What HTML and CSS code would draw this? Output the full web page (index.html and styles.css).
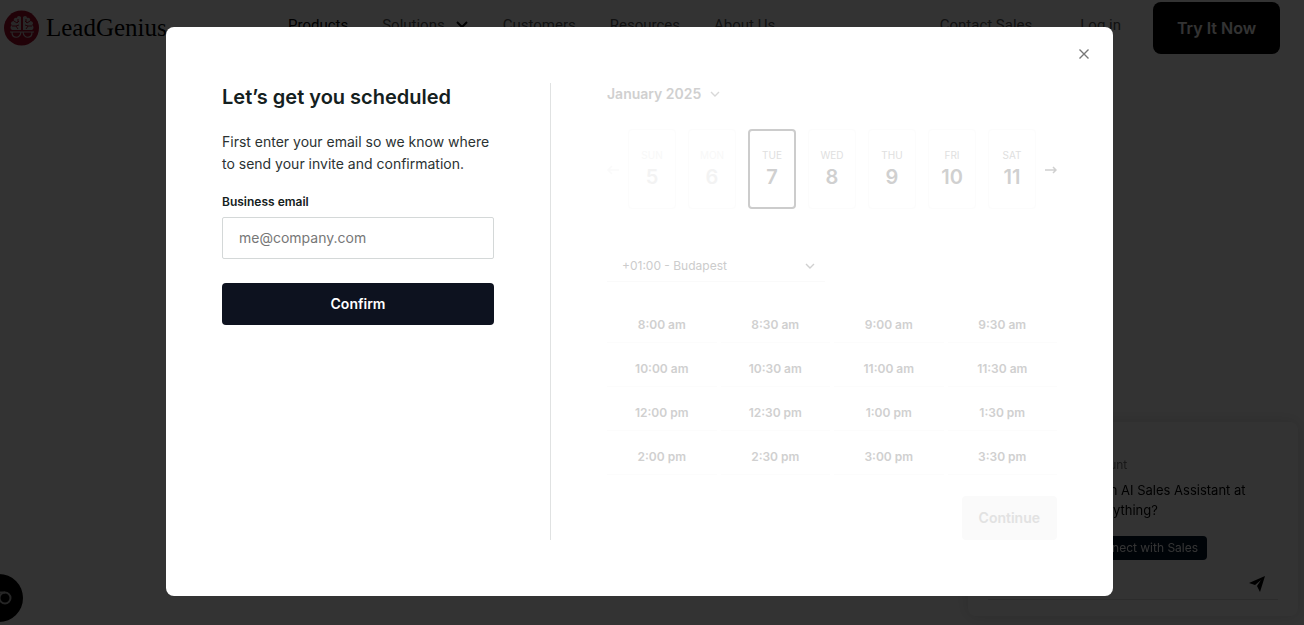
FILE: index.html
```html
<!DOCTYPE html>
<html lang="en">
<head>
    <meta charset="UTF-8">
    <meta name="viewport" content="width=device-width, initial-scale=1.0">
    <title>LeadGenius</title>
    <link rel="stylesheet" href="styles.css">
</head>
<body>
    <!-- Site header -->
    <header class="header">
        <a class="logo" href="#">
            <svg width="36" height="36" viewBox="0 0 36 36" aria-hidden="true">
                <circle cx="17.5" cy="18" r="17.5" fill="#a50d2a"/>
                <path d="M17 7c-2-2-4-1-4 1-2-1-4 1-3 3-3 0-4 3-2 4-2 1-2 4 0 5h9zM19 7c2-2 4-1 4 1 2-1 4 1 3 3 3 0 4 3 2 4 2 1 2 4 0 5h-9z" fill="#c8c8c8"/>
                <path d="M10 11l3 2 2-2M8 16h4l2 3M14 9v3M12 16l3-1M26 11l-3 2-2-2M28 16h-4l-2 3M22 9v3M24 16l-3-1" fill="none" stroke="#a50d2a"/>
                <path d="M6 22h24M8 22c0 7 8 7 9 0h2c1 7 9 7 9 0" fill="none" stroke="#c8c8c8" stroke-width="1.2"/>
            </svg>
            <span>LeadGenius</span>
        </a>
        <nav class="nav">
            <a class="active" href="#">Products</a>
            <a href="#">Solutions
                <svg width="14" height="10" viewBox="0 0 14 10" aria-hidden="true"><path d="M2 2l5 5 5-5" fill="none" stroke="#000" stroke-width="2"/></svg>
            </a>
            <a href="#">Customers</a>
            <a href="#">Resources</a>
            <a href="#">About Us</a>
        </nav>
        <div class="header-right">
            <a href="#">Contact Sales</a>
            <a href="#">Log in</a>
            <button class="try" type="button">Try It Now</button>
        </div>
    </header>

    <!-- Chat widget -->
    <aside class="chat">
        <div class="chat-message">
            <p class="chat-name">Account</p>
            <p class="chat-text">I'm an AI Sales Assistant at<br>us anything?</p>
            <button class="chat-connect" type="button">Connect with Sales</button>
        </div>
        <div class="chat-box">
            <input type="text" aria-label="Message">
            <button class="chat-send" type="button" aria-label="Send">
                <svg width="18" height="18" viewBox="0 0 18 18"><path d="M1 8L17 1l-5 16-3-6 4-6-6 5z" fill="#000"/></svg>
            </button>
        </div>
    </aside>

    <button class="cookie" type="button" aria-label="Cookie settings">
        <svg width="48" height="48" viewBox="0 0 48 48"><circle cx="24" cy="24" r="24" fill="#000"/><circle cx="30" cy="24" r="5.5" fill="none" stroke="#bbb" stroke-width="2"/><path d="M22 18.500h8" stroke="#bbb" stroke-width="2"/></svg>
    </button>

    <!-- Scheduling dialog -->
    <div class="overlay">
        <div class="modal" role="dialog" aria-modal="true" aria-labelledby="title">
            <button class="close" type="button" aria-label="Close">
                <svg width="12" height="12" viewBox="0 0 12 12"><path d="M1.5 1.5l9 9M10.5 1.5l-9 9" stroke="#777" stroke-width="1.4"/></svg>
            </button>

            <form class="email">
                <h1 id="title">Let’s get you scheduled</h1>
                <p>First enter your email so we know where to send your invite and confirmation.</p>
                <label for="email">Business email</label>
                <input id="email" type="email" placeholder="me@company.com">
                <button type="button">Confirm</button>
            </form>

            <section class="calendar">
                <button class="month" type="button">January 2025
                    <svg width="10" height="6" viewBox="0 0 10 6" aria-hidden="true"><path d="M1 1l4 4 4-4" fill="none" stroke="#d8d8d8" stroke-width="1.4"/></svg>
                </button>

                <div class="week">
                    <button class="arrow prev" type="button" aria-label="Previous week">
                        <svg width="12" height="10" viewBox="0 0 12 10"><path d="M12 5H1M5 1L1 5l4 4" fill="none" stroke="#fafafa" stroke-width="1.5"/></svg>
                    </button>
                    <button class="day past" type="button"><span>SUN</span>5</button>
                    <button class="day past" type="button"><span>MON</span>6</button>
                    <button class="day selected" type="button"><span>TUE</span>7</button>
                    <button class="day" type="button"><span>WED</span>8</button>
                    <button class="day" type="button"><span>THU</span>9</button>
                    <button class="day" type="button"><span>FRI</span>10</button>
                    <button class="day" type="button"><span>SAT</span>11</button>
                    <button class="arrow next" type="button" aria-label="Next week">
                        <svg width="12" height="10" viewBox="0 0 12 10"><path d="M0 5h11M8 2l3 3-3 3" fill="none" stroke="#d0d0d0" stroke-width="1.5"/></svg>
                    </button>
                </div>

                <div class="zone">
                    <select aria-label="Time zone"><option>+01:00 - Budapest</option></select>
                    <svg width="10" height="6" viewBox="0 0 10 6" aria-hidden="true"><path d="M1 1l4 4 4-4" fill="none" stroke="#d0d0d0" stroke-width="1.4"/></svg>
                </div>

                <div class="times">
                    <button type="button">8:00 am</button>
                    <button type="button">8:30 am</button>
                    <button type="button">9:00 am</button>
                    <button type="button">9:30 am</button>
                    <button type="button">10:00 am</button>
                    <button type="button">10:30 am</button>
                    <button type="button">11:00 am</button>
                    <button type="button">11:30 am</button>
                    <button type="button">12:00 pm</button>
                    <button type="button">12:30 pm</button>
                    <button type="button">1:00 pm</button>
                    <button type="button">1:30 pm</button>
                    <button type="button">2:00 pm</button>
                    <button type="button">2:30 pm</button>
                    <button type="button">3:00 pm</button>
                    <button type="button">3:30 pm</button>
                </div>

                <button class="continue" type="button">Continue</button>
            </section>
        </div>
    </div>
</body>
</html>
```

FILE: styles.css
```css
* {
    margin: 0;
    padding: 0;
    box-sizing: border-box;
}

body {
    min-height: 100vh;
    background: #fff;
    color: #2b3232;
    font-family: Inter, "Liberation Sans", sans-serif;
    overflow: hidden;
}

button,
input,
select {
    font: inherit;
    border: 0;
    background: none;
}

button {
    cursor: pointer;
}

svg {
    display: block;
}

a {
    color: inherit;
    text-decoration: none;
}

/* Header */
.header {
    display: flex;
    align-items: center;
    height: 56px;
    padding: 0 24px 0 4px;
    font-family: Roboto, sans-serif;
    font-size: 15px;
    color: #555;
}

.logo {
    display: flex;
    align-items: center;
    gap: 6px;
    width: 284px;
    color: #000;
    font-family: "Liberation Serif", serif;
    font-size: 25px;
}

.nav,
.header-right {
    display: flex;
    align-items: center;
}

.nav {
    gap: 34px;
    padding-bottom: 6px;
}

.nav a {
    display: flex;
    align-items: center;
    gap: 10px;
}

.nav .active {
    color: #000;
}

.header-right {
    gap: 48px;
    margin-left: auto;
}

.header-right a {
    padding-bottom: 6px;
}

.try {
    width: 127px;
    height: 52px;
    margin-left: -16px;
    border-radius: 8px;
    background: #000;
    color: #fff;
    font-family: Inter, sans-serif;
    font-size: 16px;
    font-weight: 600;
}

/* Chat widget */
.chat {
    position: fixed;
    right: 6px;
    bottom: 9px;
    width: 330px;
    padding: 33px 20px 16px;
    border-radius: 8px;
    box-shadow: 0 0 16px rgba(0, 0, 0, 0.15);
    font-size: 13px;
    line-height: 20px;
}

.chat-message {
    width: 200px;
    margin-left: auto;
    padding-left: 2px;
}

.chat-name {
    margin-bottom: 5px;
    color: #777;
    font-size: 12px;
}

.chat-text {
    color: #000;
}

.chat-connect {
    height: 24px;
    margin-top: 16px;
    padding: 0 9px;
    border-radius: 4px;
    background: #00152a;
    color: #fff;
    font-size: 12px;
}

.chat-box {
    display: flex;
    align-items: center;
    height: 32px;
    margin-top: 8px;
    padding-right: 12px;
    border-bottom: 1px solid #ddd;
}

.chat-box input {
    flex: 1;
}

.cookie {
    position: fixed;
    left: -25px;
    bottom: 3px;
}

/* Dialog */
.overlay {
    position: fixed;
    inset: 0;
    display: flex;
    align-items: center;
    justify-content: center;
    padding: 0 25px 2px 0;
    background: rgba(0, 0, 0, 0.8);
}

.modal {
    position: relative;
    display: flex;
    width: 100%;
    max-width: 947px;
    padding: 56px;
    border-radius: 8px;
    background: #fff;
}

.close {
    position: absolute;
    top: 21px;
    right: 23px;
}

.email {
    display: flex;
    flex-direction: column;
    width: 329px;
    padding-right: 56px;
    border-right: 1px solid #e0e2e2;
}

.email h1 {
    margin-bottom: 20px;
    color: #142020;
    font-size: 20px;
    font-weight: 600;
    line-height: 28px;
}

.email p {
    margin-bottom: 19px;
    font-size: 14px;
    line-height: 22px;
}

.email label {
    margin-bottom: 7px;
    color: #142020;
    font-size: 12px;
    font-weight: 600;
    line-height: 16px;
}

.email input {
    height: 42px;
    padding: 0 16px 2px;
    border: 1px solid #d4d8d8;
    border-radius: 2px;
    font-size: 14px;
}

.email input::placeholder {
    color: #777;
}

.email button {
    height: 42px;
    margin-top: 24px;
    padding-bottom: 2px;
    border-radius: 4px;
    background: #0d121f;
    color: #fff;
    font-size: 14px;
    font-weight: 600;
}

/* Calendar */
.calendar {
    flex: 1;
    display: flex;
    flex-direction: column;
    align-items: flex-start;
    padding-left: 56px;
    color: #ccc;
}

.calendar button {
    color: #d0d0d0;
}

.month {
    display: flex;
    align-items: center;
    gap: 9px;
    font-size: 14px;
    font-weight: 600;
    line-height: 22px;
}

.week {
    display: flex;
    align-items: center;
    gap: 12px;
    width: 100%;
    margin-top: 24px;
}

.arrow {
    width: 12px;
    padding-top: 2px;
}

.arrow.prev {
    margin-right: -3px;
}

.arrow.next {
    margin-left: -3px;
}

.day {
    flex: 1 1 48px;
    height: 80px;
    padding-bottom: 2px;
    border: 1px solid #fcfcfc;
    border-radius: 4px;
    font-size: 20px;
    font-weight: 600;
    line-height: 24px;
}

.day span {
    display: block;
    margin-bottom: 2px;
    color: #e0e0e0;
    font-size: 10px;
    font-weight: 400;
    line-height: 16px;
}

.calendar .past {
    color: #f3f3f3;
}

.day.past span {
    color: #f8f8f8;
}

.day.selected {
    border: 2px solid #ccc;
}

.zone {
    display: flex;
    align-items: center;
    width: 218px;
    height: 32px;
    margin-top: 41px;
    padding-right: 10px;
    border-bottom: 1px solid #fafafa;
}

.zone select {
    flex: 1;
    padding-left: 15px;
    appearance: none;
    color: #ccc;
    font-size: 12px;
}

.times {
    display: grid;
    grid-template-columns: repeat(4, 1fr);
    gap: 8px 4px;
    width: 100%;
    margin-top: 25px;
}

.times button {
    height: 36px;
    border-bottom: 1px solid #fcfcfc;
    font-size: 12px;
    font-weight: 600;
}

.continue {
    align-self: flex-end;
    height: 44px;
    margin-top: 21px;
    padding: 0 17px 2px;
    border-radius: 4px;
    background: #fafafa;
    font-size: 14px;
    font-weight: 600;
}

.calendar .continue {
    color: #e2e2e2;
}
```
